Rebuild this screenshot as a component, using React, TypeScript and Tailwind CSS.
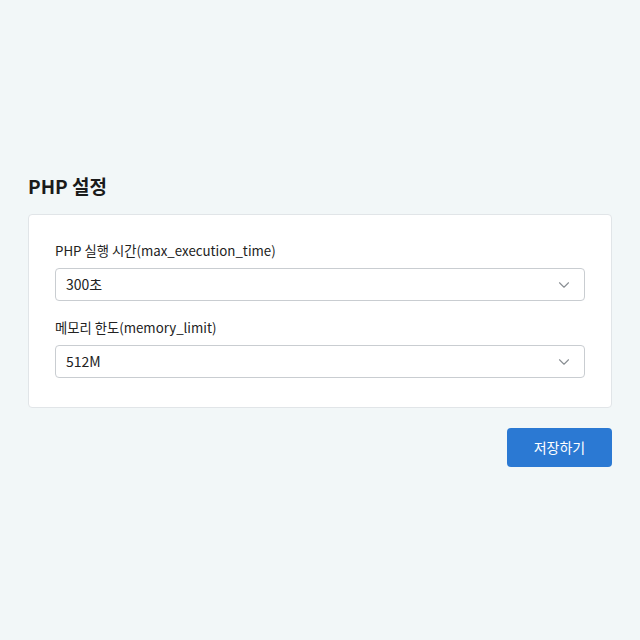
import React from 'react';
import { ChevronDown } from 'lucide-react';

const fields = [
  { label: 'PHP 실행 시간(max_execution_time)', value: '300초' },
  { label: '메모리 한도(memory_limit)', value: '512M' },
];

const SelectField: React.FC<{ label: string; value: string }> = ({ label, value }) => (
  <div className="flex flex-col">
    <label className="text-[13.3px] leading-[20px] text-[#222]">{label}</label>
    <div className="mt-[7px] flex h-[33px] items-center justify-between rounded-[4px] border border-[#c9cdd1] bg-white pl-[10px] pr-[11px]">
      <span className="text-[14px] text-[#222]">{value}</span>
      <ChevronDown className="h-[18px] w-[18px] text-[#8a8f94]" strokeWidth={1.5} />
    </div>
  </div>
);

export default function App() {
  return (
    <div
      className="min-h-[640px] w-full bg-[#f2f7f8] px-[28px] pt-[172px]"
      style={{ fontFamily: '"Noto Sans CJK KR", "Noto Sans", sans-serif' }}
    >
      <h1 className="text-[19px] font-bold leading-[28px] text-[#1a1a1a]">PHP 설정</h1>
      <div className="mt-[14px] flex flex-col gap-[17px] rounded-[4px] border border-[#e1e5e8] bg-white px-[26px] pb-[29px] pt-[26px]">
        {fields.map((f) => (
          <SelectField key={f.label} label={f.label} value={f.value} />
        ))}
      </div>
      <div className="mt-[20px] flex justify-end">
        <button className="h-[39px] w-[105px] rounded-[4px] bg-[#2b79d3] text-[14px] text-white">
          저장하기
        </button>
      </div>
    </div>
  );
}
